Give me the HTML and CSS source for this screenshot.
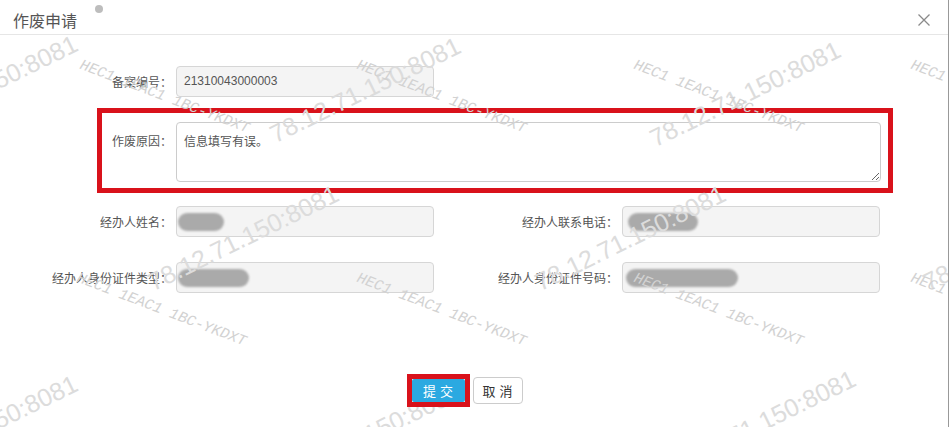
FILE: index.html
```html
<!DOCTYPE html>
<html lang="zh-CN">
<head>
    <meta charset="UTF-8">
    <meta name="viewport" content="width=device-width, initial-scale=1.0">
    <title>作废申请</title>
    <link rel="stylesheet" href="styles.css">
</head>
<body>
    <div class="dialog">
        <div class="dialog-header">
            <span class="dialog-title">作废申请</span>
            <span class="dot"></span>
            <button class="close-button" title="关闭">
                <svg width="12" height="12" viewBox="0 0 12 12">
                    <path d="M0.5 0.5 L11.5 11.5 M11.5 0.5 L0.5 11.5" stroke="#8a8a8a" stroke-width="1.3" fill="none"/>
                </svg>
            </button>
        </div>

        <div class="dialog-body">
            <div class="form-row">
                <label class="form-label">备案编号：</label>
                <div class="field">21310043000003</div>
            </div>

            <div class="mark-box">
                <div class="reason-row">
                    <label class="form-label reason-label">作废原因：</label>
                    <textarea class="reason-input" readonly>信息填写有误。</textarea>
                </div>
            </div>

            <div class="form-row row-gap-small">
                <label class="form-label">经办人姓名：</label>
                <div class="field field-hidden"><span class="redact redact-name"></span></div>
                <label class="form-label">经办人联系电话：</label>
                <div class="field field-hidden"><span class="redact redact-phone"></span></div>
            </div>

            <div class="form-row row-gap-large">
                <label class="form-label">经办人身份证件类型：</label>
                <div class="field field-hidden"><span class="redact redact-type"></span></div>
                <label class="form-label">经办人身份证件号码：</label>
                <div class="field field-hidden"><span class="redact redact-id"></span></div>
            </div>
        </div>

        <div class="dialog-footer">
            <span class="mark-button"><button class="btn btn-primary">提交</button></span>
            <button class="btn btn-default">取消</button>
        </div>

        <!-- watermark -->
        <div class="watermark">
            <span class="wm-ip ip-a1">78.12.71.150:8081</span>
            <span class="wm-ip ip-a2">78.12.71.150:8081</span>
            <span class="wm-ip ip-a3">78.12.71.150:8081</span>
            <span class="wm-ip ip-b1">78.12.71.150:8081</span>
            <span class="wm-ip ip-b2">78.12.71.150:8081</span>
            <span class="wm-ip ip-b3">78.12.71.150:8081</span>
            <span class="wm-ip ip-c1">78.12.71.150:8081</span>
            <span class="wm-ip ip-c2">78.12.71.150:8081</span>
            <span class="wm-ip ip-c3">78.12.71.150:8081</span>

            <span class="wm-user us-a1">HEC1 1EAC1 1BC-YKDXT</span>
            <span class="wm-user us-a2">HEC1 1EAC1 1BC-YKDXT</span>
            <span class="wm-user us-a3">HEC1 1EAC1 1BC-YKDXT</span>
            <span class="wm-user us-a4">HEC1 1EAC1 1BC-YKDXT</span>
            <span class="wm-user us-b1">HEC1 1EAC1 1BC-YKDXT</span>
            <span class="wm-user us-b2">HEC1 1EAC1 1BC-YKDXT</span>
            <span class="wm-user us-b3">HEC1 1EAC1 1BC-YKDXT</span>
            <span class="wm-user us-b4">HEC1 1EAC1 1BC-YKDXT</span>
        </div>
    </div>
</body>
</html>
```

FILE: styles.css
```css
body {
    margin: 0;
    font-family: "Liberation Sans", "Noto Sans CJK SC", sans-serif;
    background-color: #fff;
    color: #555;
}

.dialog {
    position: relative;
    width: 949px;
    height: 427px;
    box-sizing: border-box;
    border-right: 1px solid #999; /* modal edge */
    overflow: hidden;
    background-color: #fff;
}

.dialog-header {
    display: flex;
    align-items: center;
    height: 35px;
    padding-top: 6px;
    box-sizing: border-box;
    border-bottom: 1px solid #e6e6e6;
}

.dialog-title {
    padding-left: 13px;
    font-size: 16px;
    color: #555;
}

.dot {
    align-self: flex-start;
    width: 8px;
    height: 8px;
    margin-top: -1px;
    margin-left: 18px;
    border-radius: 50%;
    background-color: #bdbdbd;
}

.close-button {
    display: flex;
    margin-left: auto;
    margin-right: 18px;
    padding: 0;
    border: none;
    background: none;
    cursor: pointer;
}

.dialog-body {
    padding-top: 31px;
}

.form-row {
    display: grid;
    grid-template-columns: 176px 258px 188px 258px;
    align-items: center;
    height: 31px;
}

.row-gap-small {
    margin-top: 13px;
}

.row-gap-large {
    margin-top: 25px;
}

.form-label {
    padding-right: 4px;
    font-size: 12px;
    color: #555;
    text-align: right;
    white-space: nowrap;
}

.field {
    height: 31px;
    padding: 0 7px;
    box-sizing: border-box;
    border: 1px solid #d6d6d6;
    border-radius: 4px;
    background-color: #f4f4f4;
    font-size: 12px;
    line-height: 29px;
    color: #555;
}

.field-hidden {
    display: flex;
    align-items: center;
    padding: 0;
}

/* redacted values */
.redact {
    display: inline-block;
    height: 18px;
    border-radius: 9px;
    background-color: #aaa;
    filter: blur(1px);
}

.redact-name {
    width: 46px;
    margin-left: 1px;
}

.redact-phone {
    width: 70px;
    margin-left: 5px;
}

.redact-type {
    width: 71px;
    margin-left: 1px;
}

.redact-id {
    width: 112px;
    margin-left: 3px;
}

.mark-box {
    width: 796px;
    margin-top: 11px;
    margin-left: 97px;
    padding: 9px 7px 6px 0;
    box-sizing: border-box;
    border: 5px solid #d9121b; /* red highlight */
}

.reason-row {
    display: grid;
    grid-template-columns: 74px 1fr;
    align-items: start;
}

.reason-label {
    padding-top: 11px;
    line-height: 18px;
}

.reason-input {
    display: block;
    width: 100%;
    height: 60px;
    padding: 10px 7px;
    box-sizing: border-box;
    border: 1px solid #ccc;
    border-radius: 4px;
    background-color: #fff;
    font-family: inherit;
    font-size: 12px;
    line-height: 18px;
    color: #555;
    outline: none;
}

/* buttons sit above the watermark layer */
.dialog-footer {
    position: relative;
    z-index: 2;
    display: flex;
    justify-content: center;
    align-items: center;
    gap: 3px;
    margin-top: 81px;
    padding-right: 19px;
}

.mark-button {
    display: inline-flex;
    border: 5px solid #d9121b;
}

.btn {
    padding: 0 0 0 4px;
    font-family: inherit;
    font-size: 13px;
    letter-spacing: 4px;
    cursor: pointer;
}

.btn-primary {
    width: 53px;
    height: 23px;
    border: none;
    border-radius: 2px;
    background-color: #2ba9e1;
    color: #fff;
}

.btn-default {
    width: 50px;
    height: 27px;
    border: 1px solid #ccc;
    border-radius: 4px;
    background-color: #fff;
    color: #333;
}

.watermark {
    position: absolute;
    top: 0;
    left: 0;
    right: 0;
    bottom: 0;
    z-index: 1;
    overflow: hidden;
    pointer-events: none;
}

.wm-ip {
    position: absolute;
    font-size: 25px;
    line-height: 25px;
    color: #dcdcdc;
    white-space: nowrap;
    transform-origin: 0 100%;
    transform: rotate(-26deg);
}

.wm-user {
    position: absolute;
    font-family: "Liberation Mono", monospace;
    font-style: italic;
    font-size: 15px;
    line-height: 15px;
    color: #d2d2d2;
    white-space: nowrap;
    transform-origin: 0 0;
    transform: rotate(21deg);
}

.ip-a1 { left: -106px; top: 120px; }
.ip-a2 { left: 277px; top: 122px; }
.ip-a3 { left: 657px; top: 126px; }
.ip-b1 { left: 155px; top: 270px; }
.ip-b2 { left: 542px; top: 270px; }
.ip-b3 { left: 930px; top: 270px; }
.ip-c1 { left: -106px; top: 460px; }
.ip-c2 { left: 277px; top: 468px; }
.ip-c3 { left: 672px; top: 455px; }

.us-a1 { left: 83px; top: 58px; }
.us-a2 { left: 360px; top: 58px; }
.us-a3 { left: 637px; top: 58px; }
.us-a4 { left: 914px; top: 58px; }
.us-b1 { left: 80px; top: 271px; }
.us-b2 { left: 360px; top: 271px; }
.us-b3 { left: 637px; top: 271px; }
.us-b4 { left: 914px; top: 271px; }
```
